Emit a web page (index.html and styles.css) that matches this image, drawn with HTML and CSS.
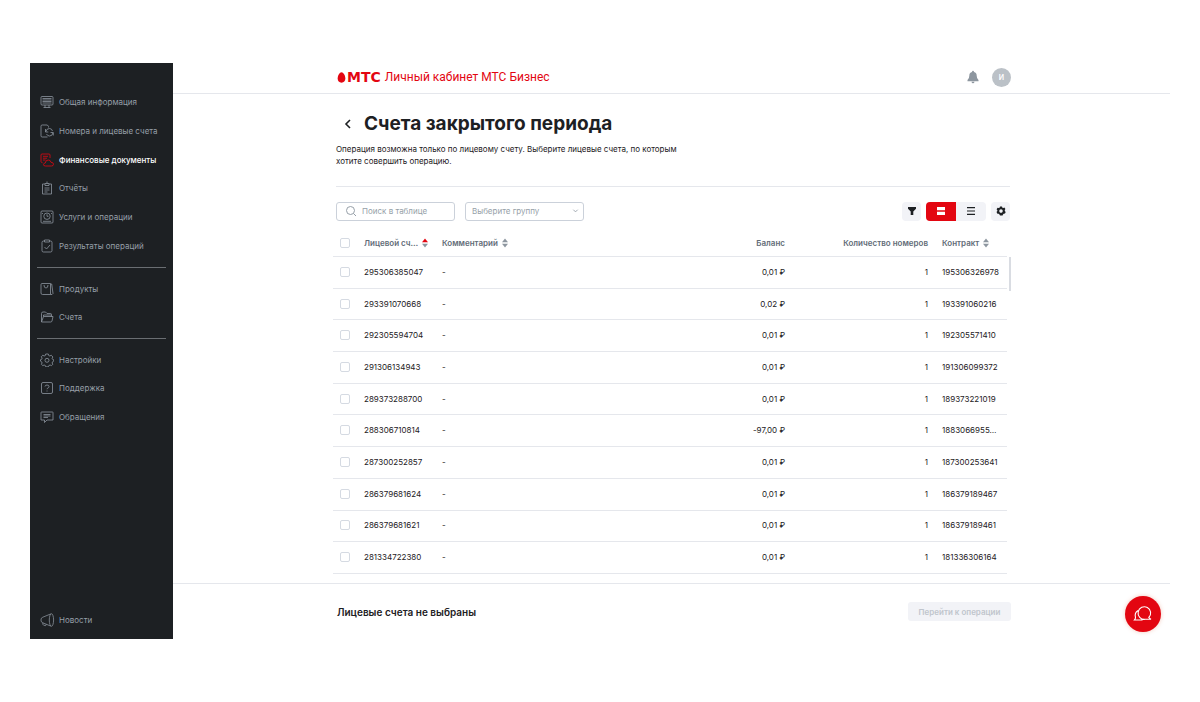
FILE: index.html
```html
<!DOCTYPE html>
<html lang="ru">
<head>
<meta charset="utf-8">
<meta name="viewport" content="width=device-width, initial-scale=1">
<title>Личный кабинет МТС Бизнес</title>
<link rel="stylesheet" href="styles.css">
</head>
<body>
<div class="app">
  <nav class="sidebar">
    <div class="menu menu-main">
      <a class="item" href="#"><svg class="icon" viewBox="0 0 14 14"><rect x="1" y="1.500" width="12" height="8.500" rx="1"/><path d="M2.500 3.500h9M2.500 5h9M2.500 6.500h9M2.500 8h9M5 10v2.500M9 10v2.500M3.500 12.500h7"/></svg>Общая информация</a>
      <a class="item" href="#"><svg class="icon" viewBox="0 0 14 14"><path d="M8.500 3.500V2.300L7.300 1H2.200Q1 1 1 2.200v9.600Q1 13 2.200 13H7.500M5.500 5v3h2.800M5.700 7.800Q6.500 4.500 9.500 4.500q2.300 0 3 2.500M13.300 11.500v-3h-2.800M13 8.800Q12.500 12 9.500 12q-2 0-3-2"/></svg>Номера и лицевые счета</a>
      <a class="item active" href="#" aria-current="page"><svg class="icon" viewBox="0 0 14 14"><path d="M10 5V2Q10 1 9 1H2Q1 1 1 2v6.500q0 1 1.500 1.200M3 3.300h5M3 5.200h4M3 7h2.500"/><path d="M5.500 13Q3.200 13 3.500 11.300 3.800 10 5.300 10 5.500 7 8.300 7q2.200 0 2.700 2.300 2.500 0 2.500 1.900Q13.500 13 11.500 13Z"/></svg>Финансовые документы</a>
      <a class="item" href="#"><svg class="icon" viewBox="0 0 14 14"><path d="M5 3H2.500v10h9V3H9M5 2.500h4v2H5zM7 .5v2M4.500 7h5M4.500 9h5M4.500 11h3"/></svg>Отчёты</a>
      <a class="item" href="#"><svg class="icon" viewBox="0 0 14 14"><rect x="1" y="1" width="12" height="12" rx="1"/><circle cx="7" cy="6.200" r="3.200"/><path d="M7 4.300v2h1.500M3 11.300h8M2.500 3v1M11.500 3v1"/></svg>Услуги и операции</a>
      <a class="item" href="#"><svg class="icon" viewBox="0 0 14 14"><path d="M4.500 2h-1Q2 2 2 3.500v8Q2 13 3.500 13h7q1.500 0 1.500-1.500v-8Q12 2 10.500 2h-1M4.500 1h5v2h-5zM4.500 8l2 2 3.500-4"/></svg>Результаты операций</a>
    </div>
    <div class="menu menu-goods">
      <a class="item" href="#"><svg class="icon" viewBox="0 0 14 14"><path d="M2 1.500h8.500V12.500H2.500Q1 12.500 1 11V2.500q0-1 1-1ZM10.500 2h1.200l1.300 9.500-1 1h-1.500M4 3q0 3 2 3t2-3"/></svg>Продукты</a>
      <a class="item" href="#"><svg class="icon" viewBox="0 0 14 14"><path d="M1.500 12V3.500Q1.500 2 3 2h2.500L7 3.500h3.500q1 0 1 1V6.500M1.500 12 3.500 6.500H13L12 11q-.3 1-1.300 1ZM3.500 6.500V5h8"/></svg>Счета</a>
    </div>
    <div class="menu menu-help">
      <a class="item" href="#"><svg class="icon" viewBox="0 0 14 14"><path d="m5.700 1h2.600l.4 1.500 1.200.5 1.300-.8 1.700 1.800-.8 1.300.4 1 1.200.4v1.500l-1.200.6-.4 1.200.7 1.300-1.400 1.300-1.300-.6-1.200.5-.5 1.300H5.700l-.4-1.300-1.200-.5-1.300.6L1.400 11.300l.7-1.300-.4-1.200L.5 8.200V6.700l1.200-.4.400-1.200-.8-1.300 1.500-1.600 1.300.8 1.200-.5Z"/><circle cx="7" cy="7.300" r="2"/></svg>Настройки</a>
      <a class="item" href="#"><svg class="icon" viewBox="0 0 14 14"><rect x="1.500" y="1.500" width="11" height="11" rx="1.500"/><path d="M5 5.500Q5.200 4 7 4q2 0 2 1.500Q9 6.500 8 7q-1 .4-1 1.200M7 9.500v1"/></svg>Поддержка</a>
      <a class="item" href="#"><svg class="icon" viewBox="0 0 14 14"><path d="M1.500 2h11q.5 0 .5.500v7.500H7l-2.500 2.500V10H1V2.500q0-.5.500-.5ZM3.500 4.500h7M3.500 6h7M3.500 7.500h4.500"/></svg>Обращения</a>
    </div>
    <a class="item news" href="#"><svg class="icon icon-news" viewBox="0 0 16 16"><path d="M11.500 1.500 3 5Q1 5.500 1 8t2 3l8.500 3.500"/><ellipse cx="12.200" cy="8" rx="2.300" ry="6.700"/><path d="M3 11q-.3 2 .8 2.500l2.200.500.7-1.500"/></svg>Новости</a>
  </nav>

  <div class="main">
    <header class="topbar">
      <a class="brand" href="#">
        <svg class="egg" viewBox="0 0 9 12"><path d="M4.500.3C6.500.3 8.700 4 8.700 7.200 8.700 10 7 11.700 4.500 11.700S.3 10 .3 7.200C.3 4 2.500.3 4.500.3Z"/></svg>
        <span class="mts">МТС</span>
        <span class="brand-name">Личный кабинет МТС Бизнес</span>
      </a>
      <div class="account">
        <button class="bell" type="button" aria-label="Уведомления"><svg viewBox="0 0 12 14"><path d="M6 .8q1 0 1 1.100 2.700.6 2.700 3.800 0 3 1.800 4.300v1.200H.5V10q1.800-1.300 1.800-4.300Q2.300 2.500 5 1.900 5 .8 6 .8ZM4.500 11.800h3Q7.300 13.300 6 13.300T4.500 11.800Z"/></svg></button>
        <button class="avatar" type="button">И</button>
      </div>
    </header>

    <main class="content">
      <div class="intro">
        <div class="title-row">
          <button class="back" type="button" aria-label="Назад"><svg viewBox="0 0 8 12"><path d="M6 2 2 6l4 4"/></svg></button>
          <h1>Счета закрытого периода</h1>
        </div>
        <p class="lead">Операция возможна только по лицевому счету. Выберите лицевые счета, по которым хотите совершить операцию.</p>
      </div>

      <div class="toolbar">
        <label class="search">
          <svg viewBox="0 0 12 12"><circle cx="5.500" cy="5.500" r="4"/><path d="m8.500 8.500 2.500 2.500"/></svg>
          <input type="text" placeholder="Поиск в таблице" aria-label="Поиск в таблице">
        </label>
        <label class="group">
          <select aria-label="Группа"><option>Выберите группу</option></select>
          <svg viewBox="0 0 8 6"><path d="m1.500 1.500 2.500 2.500 2.500-2.500"/></svg>
        </label>
        <div class="tools">
          <button class="tool" type="button" aria-label="Фильтр"><svg viewBox="0 0 10 10"><path d="M1 1h8v1.800L6.300 5.500V9H3.700V5.500L1 2.800Z"/></svg></button>
          <div class="view">
            <button class="view-btn on" type="button" aria-label="Карточки"><svg viewBox="0 0 10 10"><path d="M1 1h8v3.300H1zM1 5.700h8V9H1z"/></svg></button>
            <button class="view-btn" type="button" aria-label="Список"><svg viewBox="0 0 10 10"><path d="M1 1h8v1.200H1zM1 4.400h8v1.200H1zM1 7.800h8V9H1z"/></svg></button>
          </div>
          <button class="tool" type="button" aria-label="Настройки таблицы"><svg viewBox="0 0 10 10"><path fill-rule="evenodd" d="M4 .6h2l.4 1.100.9.400 1.100-.5 1 1.400-.6 1v1l.9.9-.7 1.700-1.300.1-.7.7-.4 1.100H4l-.5-1.100-.8-.6-1.300 0-.9-1.700.9-1V4.500L.6 3.200l1-1.500 1.100.4.900-.4ZM5 3.300A1.800 1.800 0 1 0 5 6.900 1.800 1.800 0 0 0 5 3.300Z"/></svg></button>
        </div>
      </div>

      <div class="table-area">
        <table class="accounts">
          <colgroup><col class="c-check"><col class="c-account"><col><col class="c-num"><col class="c-num"><col class="c-contract"></colgroup>
          <thead>
            <tr>
              <th><input type="checkbox" aria-label="Выбрать все"></th>
              <th><button class="sort asc" type="button">Лицевой сч…<svg viewBox="0 0 6 10"><path class="up" d="M3 .5 6 4.300H0Z"/><path d="M3 9.500 0 5.700h6Z"/></svg></button></th>
              <th><button class="sort" type="button">Комментарий<svg viewBox="0 0 6 10"><path class="up" d="M3 .5 6 4.300H0Z"/><path d="M3 9.500 0 5.700h6Z"/></svg></button></th>
              <th class="num">Баланс</th>
              <th class="num">Количество номеров</th>
              <th class="contract"><button class="sort" type="button">Контракт<svg viewBox="0 0 6 10"><path class="up" d="M3 .5 6 4.300H0Z"/><path d="M3 9.500 0 5.700h6Z"/></svg></button></th>
            </tr>
          </thead>
          <tbody>
            <tr><td><input type="checkbox" aria-label="295306385047"></td><td>295306385047</td><td>-</td><td class="num">0,01 ₽</td><td class="num">1</td><td class="contract">195306326978</td></tr>
            <tr><td><input type="checkbox" aria-label="293391070668"></td><td>293391070668</td><td>-</td><td class="num">0,02 ₽</td><td class="num">1</td><td class="contract">193391060216</td></tr>
            <tr><td><input type="checkbox" aria-label="292305594704"></td><td>292305594704</td><td>-</td><td class="num">0,01 ₽</td><td class="num">1</td><td class="contract">192305571410</td></tr>
            <tr><td><input type="checkbox" aria-label="291306134943"></td><td>291306134943</td><td>-</td><td class="num">0,01 ₽</td><td class="num">1</td><td class="contract">191306099372</td></tr>
            <tr><td><input type="checkbox" aria-label="289373288700"></td><td>289373288700</td><td>-</td><td class="num">0,01 ₽</td><td class="num">1</td><td class="contract">189373221019</td></tr>
            <tr><td><input type="checkbox" aria-label="288306710814"></td><td>288306710814</td><td>-</td><td class="num">-97,00 ₽</td><td class="num">1</td><td class="contract">1883066955…</td></tr>
            <tr><td><input type="checkbox" aria-label="287300252857"></td><td>287300252857</td><td>-</td><td class="num">0,01 ₽</td><td class="num">1</td><td class="contract">187300253641</td></tr>
            <tr><td><input type="checkbox" aria-label="286379681624"></td><td>286379681624</td><td>-</td><td class="num">0,01 ₽</td><td class="num">1</td><td class="contract">186379189467</td></tr>
            <tr><td><input type="checkbox" aria-label="286379681621"></td><td>286379681621</td><td>-</td><td class="num">0,01 ₽</td><td class="num">1</td><td class="contract">186379189461</td></tr>
            <tr><td><input type="checkbox" aria-label="281334722380"></td><td>281334722380</td><td>-</td><td class="num">0,01 ₽</td><td class="num">1</td><td class="contract">181336306164</td></tr>
          </tbody>
        </table>
        <div class="scrollbar"></div>
      </div>
    </main>

    <footer class="bottom">
      <strong class="status">Лицевые счета не выбраны</strong>
      <button class="proceed" type="button" disabled>Перейти к операции</button>
    </footer>
    <button class="chat" type="button" aria-label="Чат"><svg viewBox="0 0 20 20"><path d="M15.800 13.500A6.300 6.300 0 1 0 12 15.300h6Q16.500 14.500 15.800 13.500ZM5 6.500Q1.200 9 2.500 13.300 2.500 15 1.500 16H8q1 0 2-.8"/></svg></button>
  </div>
</div>
</body>
</html>
```
FILE: styles.css
```css
* {
  box-sizing: border-box;
}

body {
  margin: 0;
  min-height: 100vh;
  padding: 63px 30px;
  display: flex;
  background: #fff;
  color: #1d2023;
  font-family: Inter, "Liberation Sans", sans-serif;
  font-size: 8px;
}

button,
input,
select {
  font: inherit;
  color: inherit;
}

button {
  padding: 0;
  border: 0;
  background: none;
}

svg {
  display: block;
  flex: none;
}

.app {
  flex: 1;
  display: flex;
}

/* Sidebar */

.sidebar {
  flex: none;
  width: 143px;
  padding: 25px 7px 5px;
  display: flex;
  flex-direction: column;
  background: #1d2023;
}

.menu {
  display: grid;
  grid-auto-rows: 1fr;
}

.menu + .menu {
  margin-top: 7px;
  padding-top: 7px;
  border-top: 1px solid #6a6e72;
}

.menu-main {
  height: 172px;
}

.menu-goods {
  height: 64px;
}

.menu-help {
  height: 93px;
}

.item {
  display: flex;
  align-items: center;
  gap: 5px;
  padding-left: 3px;
  color: #969fa8;
  text-decoration: none;
  white-space: nowrap;
}

.item.active {
  color: #fff;
  font-weight: 500;
}

.icon {
  width: 14px;
  height: 14px;
  fill: none;
  stroke: #8d969f;
  stroke-width: 0.8;
}

.active .icon {
  stroke: #e30611;
}

.news {
  margin-top: auto;
  height: 29px;
  gap: 4px;
}

.icon-news {
  width: 15px;
  height: 16px;
}

/* Header */

.main {
  position: relative;
  flex: 1;
  min-width: 0;
  display: flex;
  flex-direction: column;
}

.topbar {
  height: 31px;
  padding: 0 159px 2px 164px;
  display: flex;
  align-items: center;
  justify-content: space-between;
  border-bottom: 1px solid #e5e7ec;
}

.brand {
  display: flex;
  align-items: center;
  color: #e30611;
  text-decoration: none;
  white-space: nowrap;
}

.egg {
  width: 9px;
  height: 11px;
  fill: #e30611;
}

.mts {
  margin: 0 4px 0 1px;
  font-family: "DejaVu Sans", sans-serif;
  font-size: 14px;
  line-height: 14px;
  font-weight: 700;
}

.brand-name {
  font-family: Roboto, sans-serif;
  font-size: 12px;
}

.account {
  display: flex;
  align-items: center;
  gap: 13px;
}

.bell svg {
  width: 12px;
  height: 14px;
  fill: #8d969f;
}

.avatar {
  width: 19px;
  height: 19px;
  border-radius: 50%;
  background: #bbc1c7;
  color: #fff;
  font-weight: 600;
  font-size: 7px;
}

/* Content */

.content {
  flex: 1;
  padding: 0 159px 0 160px;
}

.intro {
  margin: 0 1px 0 3px;
  padding-top: 18px;
  height: 93px;
  border-bottom: 1px solid #e5e7ec;
}

.title-row {
  display: flex;
  align-items: center;
  gap: 12px;
  padding-left: 8px;
}

.back svg {
  width: 8px;
  height: 12px;
  fill: none;
  stroke: #1d2023;
  stroke-width: 1.6;
}

h1 {
  margin: 0;
  font-size: 19px;
  line-height: 24px;
  font-weight: 700;
}

.lead {
  margin: 7px 0 0;
  max-width: 345px;
  line-height: 12px;
}

.toolbar {
  display: flex;
  align-items: center;
  gap: 10px;
  margin: 14px 1px 9px 3px;
  height: 20px;
}

.search,
.group {
  width: 119px;
  height: 19px;
  display: flex;
  align-items: center;
  border: 1px solid #cbd1da;
  border-radius: 3px;
  color: #969fa8;
}

.search {
  padding: 0 4px 0 8px;
  gap: 5px;
}

.search svg {
  width: 12px;
  height: 12px;
  fill: none;
  stroke: #969fa8;
}

.search input {
  flex: 1;
  min-width: 0;
  padding: 0;
  border: 0;
  outline: 0;
  background: none;
}

.search input::placeholder {
  color: #969fa8;
  opacity: 1;
}

.group {
  padding: 0 4px 0 6px;
}

.group select {
  flex: 1;
  min-width: 0;
  padding: 0;
  border: 0;
  background: none;
  appearance: none;
}

.group svg {
  width: 7px;
  height: 6px;
  fill: none;
  stroke: #969fa8;
}

.tools {
  margin-left: auto;
  display: flex;
  gap: 5px;
}

.tool,
.view-btn {
  height: 19px;
  display: flex;
  align-items: center;
  justify-content: center;
  background: #f2f3f7;
  fill: #1d2023;
}

.tool {
  width: 19px;
  border-radius: 4px;
}

.tool svg,
.view-btn svg {
  width: 10px;
  height: 10px;
}

.view {
  display: flex;
  overflow: hidden;
  border-radius: 4px;
}

.view-btn {
  width: 30px;
}

.view-btn.on {
  background: #e30611;
  fill: #fff;
}

/* Table */

.table-area {
  display: flex;
  gap: 2px;
}

.accounts {
  flex: 1;
  min-width: 0;
  height: 344px;
  table-layout: fixed;
  border-collapse: separate;
  border-spacing: 0;
}

.c-check {
  width: 31px;
}

.c-account {
  width: 78px;
}

.c-num {
  width: 143px;
}

.c-contract {
  width: 79px;
}

.accounts th,
.accounts td {
  padding: 0;
  border-bottom: 1px solid #e5e7ec;
  text-align: left;
  vertical-align: middle;
  white-space: nowrap;
}

.accounts td {
  padding-bottom: 1px;
}

.accounts th {
  height: 27px;
  color: #626c77;
  font-weight: 600;
}

.accounts .num {
  text-align: right;
}

.accounts .contract {
  padding-left: 14px;
}

.accounts input {
  appearance: none;
  display: block;
  width: 10px;
  height: 10px;
  margin: 0 0 0 7px;
  border: 1px solid #d5dae2;
  border-radius: 2px;
  background: #fff;
}

.accounts input:checked {
  border-color: #e30611;
  background: #e30611;
}

.sort {
  display: flex;
  align-items: center;
  gap: 4px;
}

.sort svg {
  width: 6px;
  height: 10px;
  fill: #8d969f;
}

.asc .up {
  fill: #e30611;
}

.scrollbar {
  width: 2px;
  height: 34px;
  margin-top: 27px;
  background: #d9dce2;
}

/* Footer */

.bottom {
  height: 56px;
  padding: 0 159px 0 164px;
  display: flex;
  align-items: center;
  justify-content: space-between;
  border-top: 1px solid #e5e7ec;
}

.status {
  font-size: 10px;
  font-weight: 600;
}

.proceed {
  width: 103px;
  height: 19px;
  border-radius: 3px;
  background: #f2f3f7;
  color: #c0c5cc;
  font-weight: 600;
}

.chat {
  position: absolute;
  right: 9px;
  bottom: 7px;
  width: 36px;
  height: 36px;
  display: flex;
  align-items: center;
  justify-content: center;
  border-radius: 50%;
  background: #e30611;
  box-shadow: 0 0 4px rgba(227, 120, 90, 0.4);
}

.chat svg {
  width: 20px;
  height: 20px;
  fill: none;
  stroke: #fff;
  stroke-width: 1.1;
}
```
